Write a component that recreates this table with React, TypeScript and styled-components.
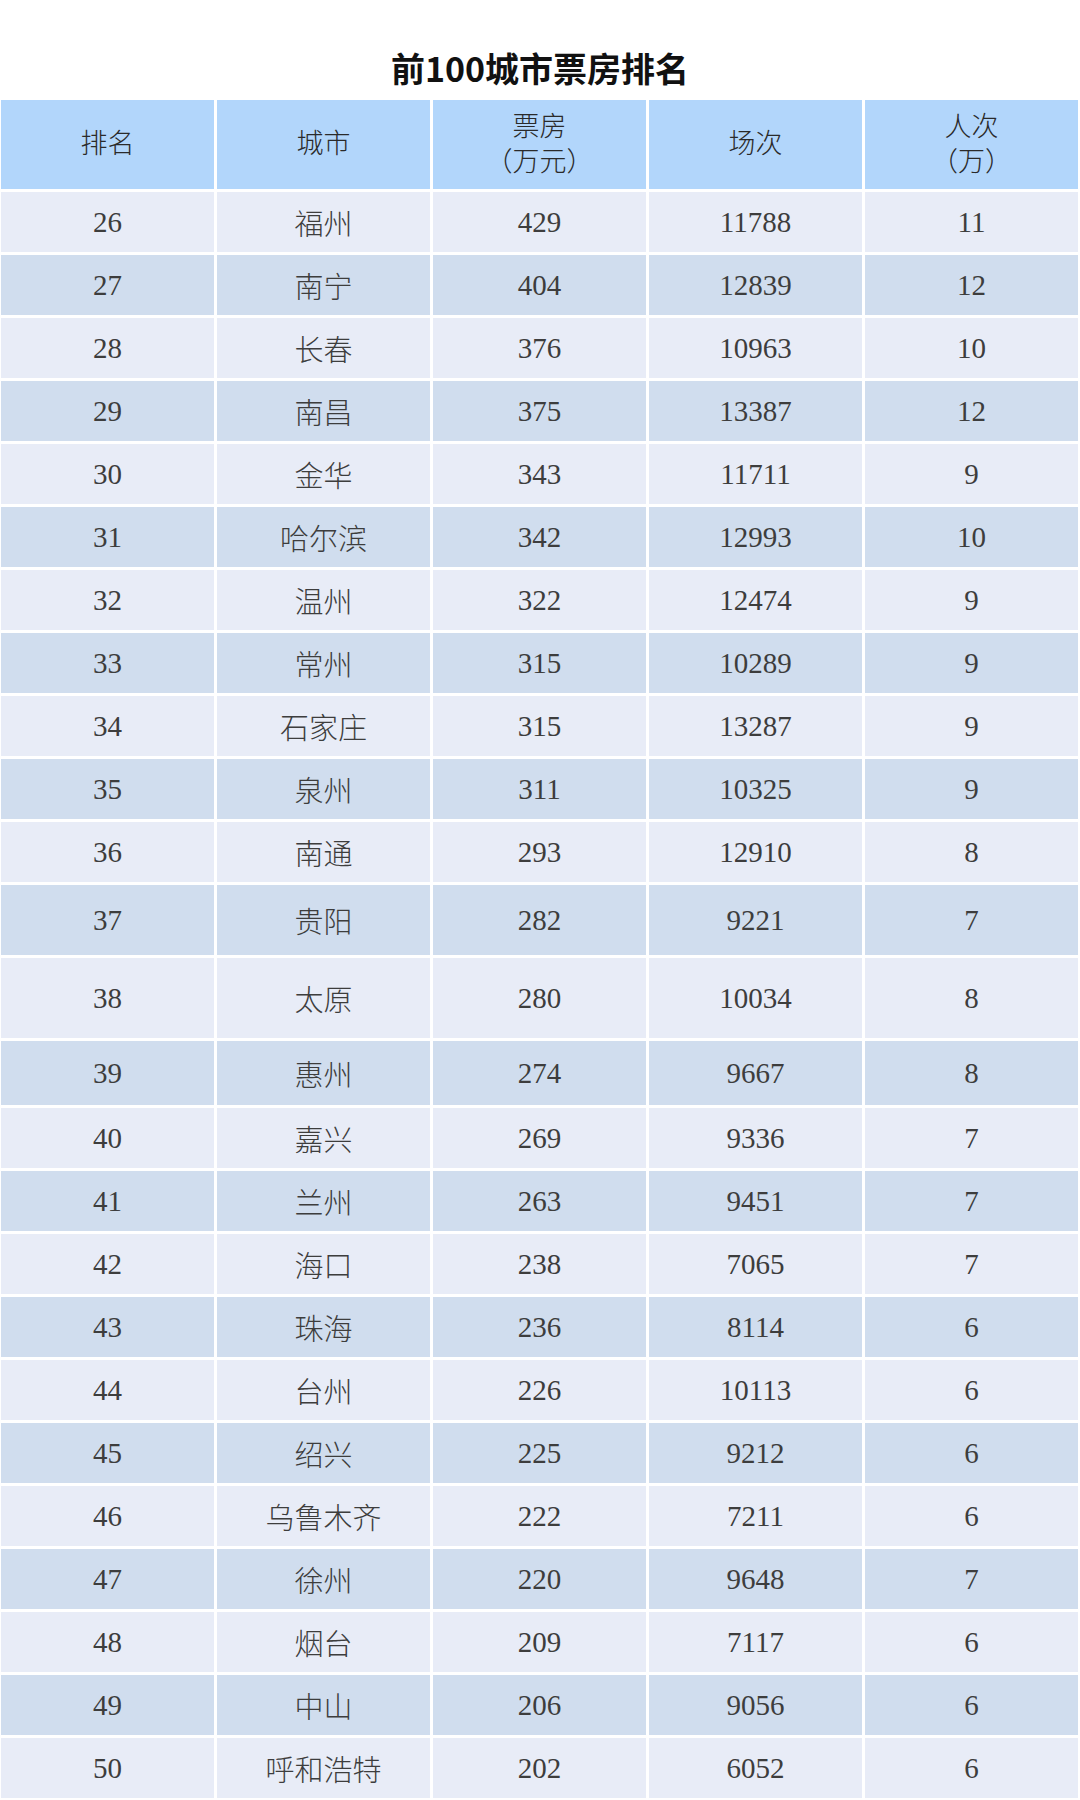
import React from "react";
import styled, { createGlobalStyle } from "styled-components";

const GlobalStyle = createGlobalStyle`
  html, body {
    margin: 0;
    padding: 0;
    background: #ffffff;
  }
  body {
    font-family: "Liberation Serif", "Noto Sans CJK SC", serif;
  }
`;

const Page = styled.div`
  width: 1080px;
  height: 1800px;
  background: #ffffff;
  overflow: hidden;
`;

const TitleBar = styled.div`
  height: 100px;
  display: flex;
  align-items: flex-end;
  justify-content: center;
  padding-bottom: 12px;
  box-sizing: border-box;
`;

const Title = styled.h1`
  margin: 0;
  font-family: "Noto Sans CJK SC", "Noto Sans", sans-serif;
  font-weight: 700;
  font-size: 34px;
  line-height: 40px;
  color: #111111;
`;

const Grid = styled.div`
  display: grid;
  grid-template-columns: repeat(5, 1fr);
  column-gap: 3px;
  row-gap: 3px;
  padding: 0 2px 0 1px;
`;

const HeadCell = styled.div`
  height: 89px;
  background: #b2d6fb;
  display: flex;
  flex-direction: column;
  align-items: center;
  justify-content: center;
  font-family: "Liberation Serif", "Noto Sans CJK SC", serif;
  font-weight: 300;
  font-size: 27px;
  line-height: 35px;
  color: #2a2a2a;
`;

const Cell = styled.div<{ $h: number; $alt: boolean }>`
  height: ${(p) => p.$h}px;
  background: ${(p) => (p.$alt ? "#d0ddee" : "#e8ecf7")};
  display: flex;
  align-items: center;
  justify-content: center;
  font-family: "Liberation Serif", "Noto Sans CJK SC", serif;
  font-weight: 300;
  font-size: 29px;
  color: #3d3d3d;
`;

type Row = [number, string, number, number, number];

const rows: Row[] = [
  [26, "福州", 429, 11788, 11],
  [27, "南宁", 404, 12839, 12],
  [28, "长春", 376, 10963, 10],
  [29, "南昌", 375, 13387, 12],
  [30, "金华", 343, 11711, 9],
  [31, "哈尔滨", 342, 12993, 10],
  [32, "温州", 322, 12474, 9],
  [33, "常州", 315, 10289, 9],
  [34, "石家庄", 315, 13287, 9],
  [35, "泉州", 311, 10325, 9],
  [36, "南通", 293, 12910, 8],
  [37, "贵阳", 282, 9221, 7],
  [38, "太原", 280, 10034, 8],
  [39, "惠州", 274, 9667, 8],
  [40, "嘉兴", 269, 9336, 7],
  [41, "兰州", 263, 9451, 7],
  [42, "海口", 238, 7065, 7],
  [43, "珠海", 236, 8114, 6],
  [44, "台州", 226, 10113, 6],
  [45, "绍兴", 225, 9212, 6],
  [46, "乌鲁木齐", 222, 7211, 6],
  [47, "徐州", 220, 9648, 7],
  [48, "烟台", 209, 7117, 6],
  [49, "中山", 206, 9056, 6],
  [50, "呼和浩特", 202, 6052, 6],
];

const heightFor = (rank: number): number => {
  if (rank === 37) return 70;
  if (rank === 38) return 80;
  if (rank === 39) return 64;
  return 60;
};

export default function App() {
  return (
    <Page>
      <GlobalStyle />
      <TitleBar>
        <Title>前100城市票房排名</Title>
      </TitleBar>
      <Grid>
        <HeadCell>排名</HeadCell>
        <HeadCell>城市</HeadCell>
        <HeadCell>
          <span>票房</span>
          <span>（万元）</span>
        </HeadCell>
        <HeadCell>场次</HeadCell>
        <HeadCell>
          <span>人次</span>
          <span>（万）</span>
        </HeadCell>
        {rows.map((r, i) => {
          const h = heightFor(r[0]);
          const alt = i % 2 === 1;
          return (
            <React.Fragment key={r[0]}>
              {r.map((v, j) => (
                <Cell key={j} $h={h} $alt={alt}>
                  {v}
                </Cell>
              ))}
            </React.Fragment>
          );
        })}
      </Grid>
    </Page>
  );
}
